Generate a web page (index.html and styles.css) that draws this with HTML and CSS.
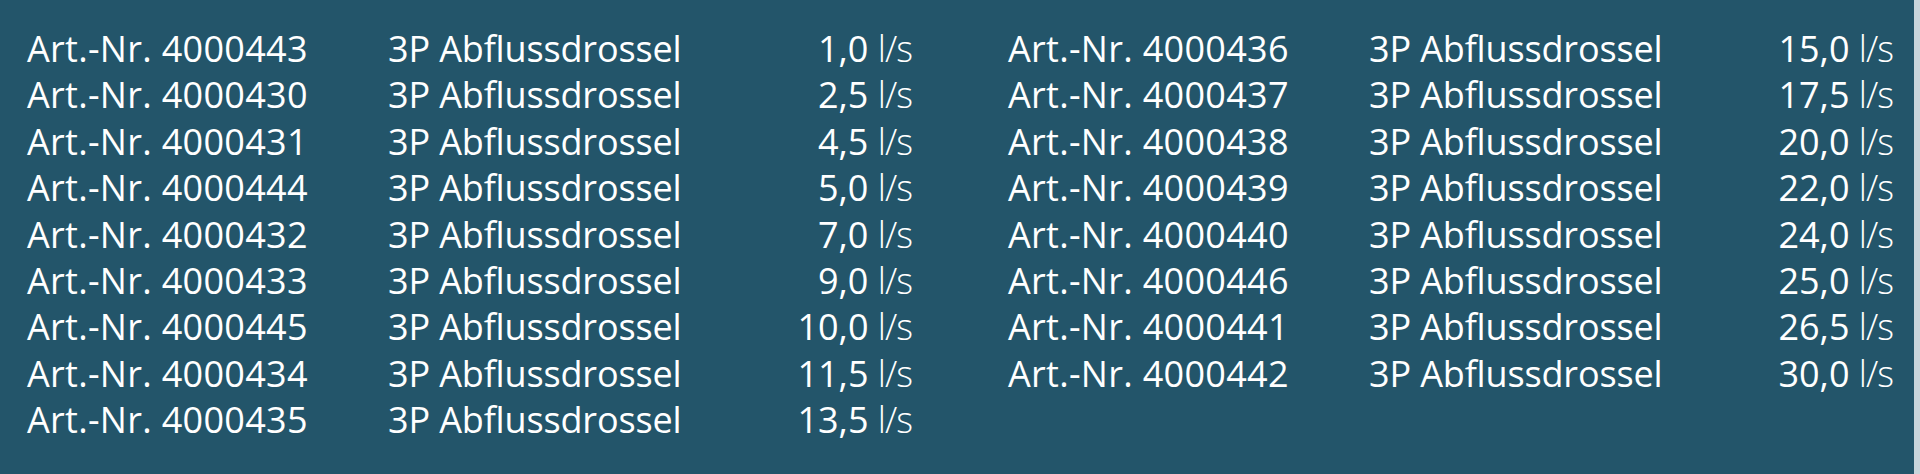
FILE: index.html
```html
<!DOCTYPE html>
<html lang="de">
<head>
<meta charset="utf-8">
<link rel="stylesheet" href="styles.css">
</head>
<body>
<div class="panel">
  <div class="group">
    <span class="art">Art.-Nr. 4000443</span><span class="name">3P Abflussdrossel</span><span class="val">1,0 <span class="unit">l/s</span></span>
    <span class="art">Art.-Nr. 4000430</span><span class="name">3P Abflussdrossel</span><span class="val">2,5 <span class="unit">l/s</span></span>
    <span class="art">Art.-Nr. 4000431</span><span class="name">3P Abflussdrossel</span><span class="val">4,5 <span class="unit">l/s</span></span>
    <span class="art">Art.-Nr. 4000444</span><span class="name">3P Abflussdrossel</span><span class="val">5,0 <span class="unit">l/s</span></span>
    <span class="art">Art.-Nr. 4000432</span><span class="name">3P Abflussdrossel</span><span class="val">7,0 <span class="unit">l/s</span></span>
    <span class="art">Art.-Nr. 4000433</span><span class="name">3P Abflussdrossel</span><span class="val">9,0 <span class="unit">l/s</span></span>
    <span class="art">Art.-Nr. 4000445</span><span class="name">3P Abflussdrossel</span><span class="val">10,0 <span class="unit">l/s</span></span>
    <span class="art">Art.-Nr. 4000434</span><span class="name">3P Abflussdrossel</span><span class="val">11,5 <span class="unit">l/s</span></span>
    <span class="art">Art.-Nr. 4000435</span><span class="name">3P Abflussdrossel</span><span class="val">13,5 <span class="unit">l/s</span></span>
  </div>
  <div class="group">
    <span class="art">Art.-Nr. 4000436</span><span class="name">3P Abflussdrossel</span><span class="val">15,0 <span class="unit">l/s</span></span>
    <span class="art">Art.-Nr. 4000437</span><span class="name">3P Abflussdrossel</span><span class="val">17,5 <span class="unit">l/s</span></span>
    <span class="art">Art.-Nr. 4000438</span><span class="name">3P Abflussdrossel</span><span class="val">20,0 <span class="unit">l/s</span></span>
    <span class="art">Art.-Nr. 4000439</span><span class="name">3P Abflussdrossel</span><span class="val">22,0 <span class="unit">l/s</span></span>
    <span class="art">Art.-Nr. 4000440</span><span class="name">3P Abflussdrossel</span><span class="val">24,0 <span class="unit">l/s</span></span>
    <span class="art">Art.-Nr. 4000446</span><span class="name">3P Abflussdrossel</span><span class="val">25,0 <span class="unit">l/s</span></span>
    <span class="art">Art.-Nr. 4000441</span><span class="name">3P Abflussdrossel</span><span class="val">26,5 <span class="unit">l/s</span></span>
    <span class="art">Art.-Nr. 4000442</span><span class="name">3P Abflussdrossel</span><span class="val">30,0 <span class="unit">l/s</span></span>
  </div>
</div>
</body>
</html>
```
FILE: styles.css
```css
html, body {
  margin: 0;
  padding: 0;
}
body {
  background: #c9d5db;
  width: 1920px;
  height: 474px;
  overflow: hidden;
}
.panel {
  width: 1914px;
  height: 474px;
  box-sizing: border-box;
  background: #23556a;
  color: #ffffff;
  font-family: "Open Sans", "Noto Sans", sans-serif;
  font-size: 36px;
  line-height: 46.4px;
  padding: 26px 21px 0 27px;
  display: grid;
  grid-template-columns: 885px 885px;
  column-gap: 96px;
  align-items: start;
}
.group {
  display: grid;
  grid-template-columns: 361px 1fr auto;
}
.art {
  white-space: nowrap;
  letter-spacing: 0.3px;
}
.name {
  white-space: nowrap;
  letter-spacing: -0.15px;
}
.val {
  text-align: right;
  white-space: nowrap;
}
.unit {
  font-weight: 300;
  letter-spacing: -1px;
}
```
